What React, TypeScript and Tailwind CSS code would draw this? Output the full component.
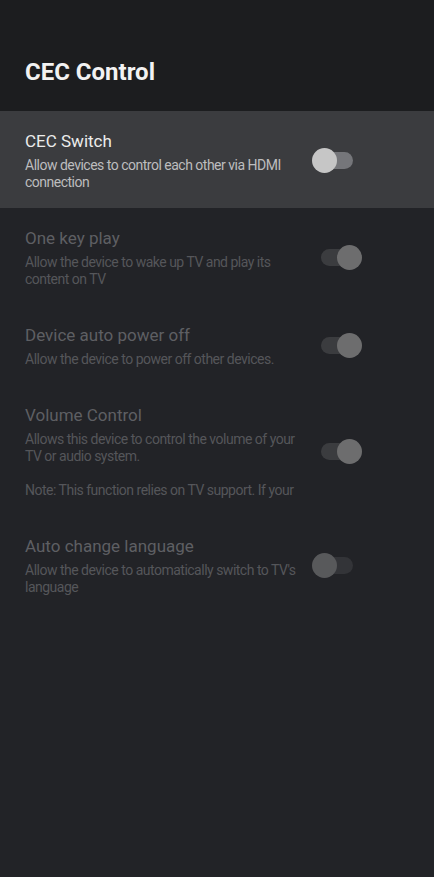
const font = { fontFamily: "Roboto, 'Noto Sans', sans-serif" };

type Item = {
  title: string;
  desc: string[];
  on: boolean;
  focused?: boolean;
};

const items: Item[] = [
  {
    title: "CEC Switch",
    desc: ["Allow devices to control each other via HDMI", "connection"],
    on: false,
    focused: true,
  },
  {
    title: "One key play",
    desc: ["Allow the device to wake up TV and play its", "content on TV"],
    on: true,
  },
  {
    title: "Device auto power off",
    desc: ["Allow the device to power off other devices."],
    on: true,
  },
  {
    title: "Volume Control",
    desc: [
      "Allows this device to control the volume of your",
      "TV or audio system.",
      "",
      "Note: This function relies on TV support. If your",
    ],
    on: true,
  },
  {
    title: "Auto change language",
    desc: ["Allow the device to automatically switch to TV's", "language"],
    on: false,
  },
];

function Toggle({ on, focused }: { on: boolean; focused?: boolean }) {
  const track = focused ? "bg-[#75767a]" : on ? "bg-[#3b3c3f]" : "bg-[#333438]";
  const thumb = focused ? "bg-[#c6c6c6]" : on ? "bg-[#6d6d6e]" : "bg-[#58595b]";
  return (
    <div className="relative h-[25px] w-[50px] shrink-0">
      <div className={`absolute left-[9px] top-[4px] h-[17px] w-[32px] rounded-full ${track}`} />
      <div
        className={`absolute top-0 h-[25px] w-[25px] rounded-full ${thumb} ${
          on ? "left-[25px]" : "left-0"
        }`}
      />
    </div>
  );
}

export default function App() {
  return (
    <main className="min-h-[877px] bg-[#222327]" style={font}>
      {/* header */}
      <header className="h-[111px] bg-[#1c1d1f] px-[25px] pt-[57px]">
        <h1 className="text-[24px] font-bold leading-[30px] text-[#f2f2f2]">CEC Control</h1>
      </header>

      {/* settings list */}
      <div>
        {items.map((it) => (
          <div
            key={it.title}
            className={`flex items-center pl-[25px] pr-[72px] pt-[18px] pb-[17px] ${
              it.focused ? "bg-[#3b3c3f]" : ""
            }`}
          >
            <div className="w-[277px]">
              <div
                className={`text-[17px] leading-[24px] ${
                  it.focused ? "text-[#ececec]" : "text-[#5e5f63]"
                }`}
              >
                {it.title}
              </div>
              <div
                className={`mt-[4px] text-[14px] leading-[17px] tracking-[-0.5px] ${
                  it.focused ? "text-[#bdbdbe]" : "text-[#55565a]"
                }`}
              >
                {it.desc.map((l, i) => (
                  <div key={i} className="h-[17px] whitespace-nowrap">
                    {l}
                  </div>
                ))}
              </div>
            </div>
            <div className="ml-[10px]">
              <Toggle on={it.on} focused={it.focused} />
            </div>
          </div>
        ))}
      </div>
    </main>
  );
}
